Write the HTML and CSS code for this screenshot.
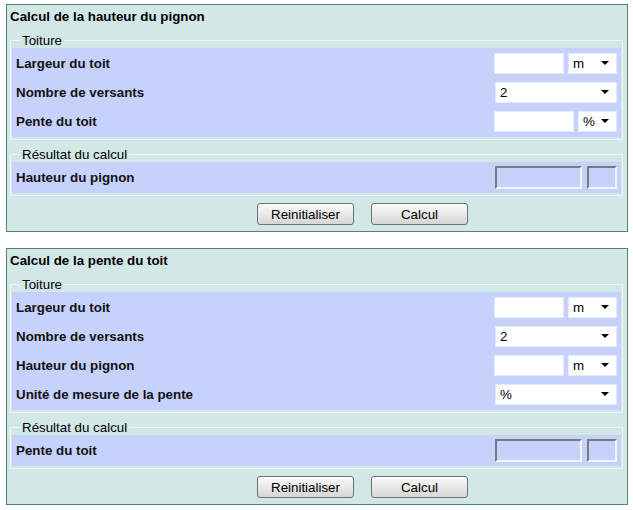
FILE: index.html
```html
<!DOCTYPE html>
<html lang="fr">
<head>
    <meta charset="UTF-8">
    <meta name="viewport" content="width=device-width, initial-scale=1.0">
    <title>Calcul du pignon</title>
    <link rel="stylesheet" href="styles.css">
</head>
<body>
    <div class="panel">
        <div class="panel-title">Calcul de la hauteur du pignon</div>
        <fieldset class="group">
            <legend>Toiture</legend>
            <div class="rows">
                <div class="row">
                    <label>Largeur du toit</label>
                    <div class="fields">
                        <input type="text" class="txt w70">
                        <span class="sel w49"><select><option>m</option><option>cm</option></select></span>
                    </div>
                </div>
                <div class="row">
                    <label>Nombre de versants</label>
                    <div class="fields">
                        <span class="sel w122"><select><option>2</option><option>1</option></select></span>
                    </div>
                </div>
                <div class="row">
                    <label>Pente du toit</label>
                    <div class="fields">
                        <input type="text" class="txt w80">
                        <span class="sel w39"><select><option>%</option><option>°</option></select></span>
                    </div>
                </div>
            </div>
        </fieldset>
        <fieldset class="group">
            <legend>Résultat du calcul</legend>
            <div class="rows">
                <div class="row">
                    <label>Hauteur du pignon</label>
                    <div class="fields">
                        <input type="text" class="out w87" readonly>
                        <input type="text" class="out w30" readonly>
                    </div>
                </div>
            </div>
        </fieldset>
        <div class="actions">
            <button type="button" class="btn">Reinitialiser</button>
            <button type="button" class="btn">Calcul</button>
        </div>
    </div>

    <div class="panel">
        <div class="panel-title">Calcul de la pente du toit</div>
        <fieldset class="group">
            <legend>Toiture</legend>
            <div class="rows">
                <div class="row">
                    <label>Largeur du toit</label>
                    <div class="fields">
                        <input type="text" class="txt w70">
                        <span class="sel w49"><select><option>m</option><option>cm</option></select></span>
                    </div>
                </div>
                <div class="row">
                    <label>Nombre de versants</label>
                    <div class="fields">
                        <span class="sel w122"><select><option>2</option><option>1</option></select></span>
                    </div>
                </div>
                <div class="row">
                    <label>Hauteur du pignon</label>
                    <div class="fields">
                        <input type="text" class="txt w70">
                        <span class="sel w49"><select><option>m</option><option>cm</option></select></span>
                    </div>
                </div>
                <div class="row">
                    <label>Unité de mesure de la pente</label>
                    <div class="fields">
                        <span class="sel w122"><select><option>%</option><option>°</option></select></span>
                    </div>
                </div>
            </div>
        </fieldset>
        <fieldset class="group">
            <legend>Résultat du calcul</legend>
            <div class="rows">
                <div class="row">
                    <label>Pente du toit</label>
                    <div class="fields">
                        <input type="text" class="out w87" readonly>
                        <input type="text" class="out w30" readonly>
                    </div>
                </div>
            </div>
        </fieldset>
        <div class="actions">
            <button type="button" class="btn">Reinitialiser</button>
            <button type="button" class="btn">Calcul</button>
        </div>
    </div>
</body>
</html>
```

FILE: styles.css
```css
body { margin: 4px 5px 0 6px; background: #fff; font-family: 'Liberation Sans', Arial, sans-serif; font-size: 10pt; color: #000; }
.panel { border: 1px solid #557e7c; background: #d2e8e6; margin-bottom: 16px; padding-bottom: 6px; }
.panel-title { font-weight: bold; line-height: 16px; padding: 4px 3px 8px; }
.group { margin: 0 4px 0 3px; padding: 0 1px 2px; border: 1px solid #eef7f6; min-width: 0; }
.group + .group { margin-top: 7px; }
.group legend { margin-left: 8px; padding: 0 2px; line-height: 15px; }
.rows { background: #c6d2fc; padding: 1px 0; }
.row { display: flex; align-items: center; justify-content: space-between; height: 29px; padding: 0 4px; }
.row label { font-weight: bold; color: #111; }
.fields { display: flex; gap: 4px; }
.txt, .out, .sel select { box-sizing: border-box; height: 21px; font: inherit; margin: 0; }
.txt { border: 1px solid #e4eaff; background: #fff; padding: 0 3px; }
.out { height: 23px; border: 2px solid; border-color: #7a7a7a #f2f4ff #f2f4ff #7a7a7a; background: #c6d2fc; }
.out.w30 { margin-left: 1px; }
.sel { position: relative; display: block; }
.sel select { width: 100%; appearance: none; -webkit-appearance: none; border: 1px solid #e4eaff; background: #fff; padding: 0 0 0 4px; border-radius: 0; color: #000; }
.sel::after { content: ''; position: absolute; right: 8px; top: 8px; border-left: 4px solid transparent; border-right: 4px solid transparent; border-top: 4px solid #000; pointer-events: none; }
.w30 { width: 30px; }
.w39 { width: 39px; }
.w49 { width: 49px; }
.w70 { width: 70px; }
.w80 { width: 80px; }
.w87 { width: 87px; }
.w122 { width: 122px; }
.actions { display: flex; gap: 17px; margin-top: 7px; padding-left: 250px; }
.btn { width: 97px; height: 22px; font: inherit; color: #000; border: 1px solid #707070; border-radius: 3px; background: linear-gradient(#fbfbfb, #e8e8e8 50%, #d6d6d6); padding: 0; }
```
